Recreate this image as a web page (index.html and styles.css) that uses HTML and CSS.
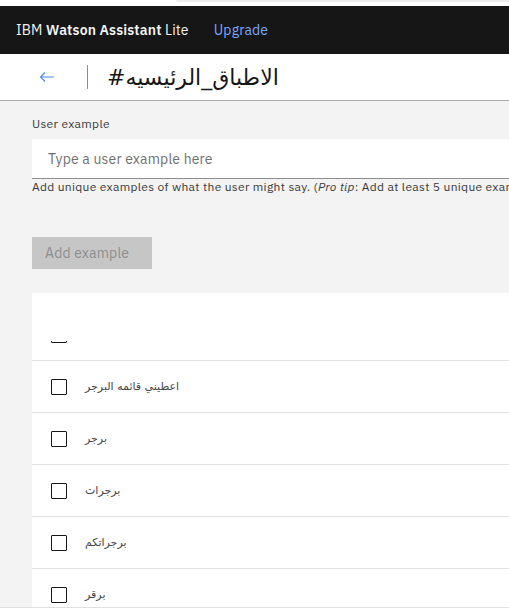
FILE: index.html
```html
<!DOCTYPE html>
<html lang="en">
<head>
<meta charset="utf-8">
<title>IBM Watson Assistant Lite</title>
<link rel="stylesheet" href="styles.css">
</head>
<body>
<div class="topstrip"><div class="tab"></div></div>
<header class="masthead">
  <span class="brand">IBM <b>Watson Assistant</b> Lite</span>
  <a class="upgrade" href="#">Upgrade</a>
</header>
<div class="pagehead">
  <svg class="back" width="16" height="12" viewBox="0 0 16 12"><path d="M15 6H1.5M6 1.5L1.5 6L6 10.5" fill="none" stroke="#4589ff" stroke-width="1.1"/></svg>
  <span class="divider"></span>
  <h1 class="title">#الاطباق_الرئيسيه</h1>
</div>
<main class="content">
  <div class="field-label">User example</div>
  <div class="input">Type a user example here</div>
  <div class="helper">Add unique examples of what the user might say. (<i>Pro tip</i>: Add at least 5 unique examples to help Watson understand.)</div>
  <button class="btn">Add example</button>
  <section class="list">
    <div class="list-head"></div>
    <div class="viewport">
      <div class="rows">
        <div class="row first"><span class="cb"></span><span class="txt">اعطيني قائمة البرجر</span></div>
        <div class="row"><span class="cb"></span><span class="txt">اعطيني قائمه البرجر</span></div>
        <div class="row"><span class="cb"></span><span class="txt">برجر</span></div>
        <div class="row"><span class="cb"></span><span class="txt">برجرات</span></div>
        <div class="row"><span class="cb"></span><span class="txt">برجراتكم</span></div>
        <div class="row"><span class="cb"></span><span class="txt">برقر</span></div>
      </div>
    </div>
  </section>
</main>
<div class="footer"></div>
</body>
</html>
```
FILE: styles.css
```css
html, body {
  margin: 0;
  padding: 0;
}
body {
  width: 509px;
  height: 614px;
  overflow: hidden;
  background: #ffffff;
  font-family: "IBM Plex Sans", "Noto Sans", Inter, sans-serif;
  color: #161616;
}
.topstrip {
  height: 6px;
  display: flex;
}
.topstrip .tab {
  margin-left: 176px;
  flex: 1;
  height: 2px;
  background: #ededed;
  border-bottom-left-radius: 8px;
}
.masthead {
  height: 48px;
  background: #161616;
  display: flex;
  align-items: center;
  padding-left: 16px;
  gap: 25px;
  font-size: 14px;
  letter-spacing: 0.16px;
}
.brand {
  color: #f4f4f4;
}
.brand b {
  font-weight: 600;
}
.upgrade {
  color: #78a9ff;
  text-decoration: none;
}
.pagehead {
  height: 46px;
  border-bottom: 1px solid #a8a8a8;
  display: flex;
  align-items: center;
  padding-left: 39px;
}
.back {
  display: block;
}
.divider {
  width: 1px;
  height: 24px;
  background: #8d8d8d;
  margin-left: 32px;
}
.title {
  margin: 0 0 0 19px;
  font-family: "DejaVu Sans", "Liberation Sans", sans-serif;
  font-weight: 400;
  font-size: 22px;
  color: #161616;
}
.content {
  background: #f3f3f3;
  height: 506px;
  overflow: hidden;
  padding-left: 32px;
  box-sizing: border-box;
  padding-top: 15px;
  width: 900px;
}
.field-label {
  font-size: 12px;
  line-height: 16px;
  letter-spacing: 0.32px;
  color: #393939;
  margin-bottom: 7px;
}
.input {
  background: #ffffff;
  height: 39px;
  border-bottom: 1px solid #8d8d8d;
  box-sizing: content-box;
  display: flex;
  align-items: center;
  padding-left: 16px;
  font-size: 14px;
  letter-spacing: 0.16px;
  color: #6f6f6f;
}
.helper {
  font-size: 12px;
  line-height: 16px;
  letter-spacing: 0.32px;
  color: #393939;
  white-space: nowrap;
}
.btn {
  display: block;
  margin-top: 42px;
  width: 120px;
  height: 32px;
  border: 0;
  background: #c6c6c6;
  color: #8d8d8d;
  font-family: inherit;
  font-size: 14px;
  letter-spacing: 0.16px;
  text-align: left;
  padding: 0 0 0 13px;
}
.list {
  margin-top: 24px;
  background: #ffffff;
}
.list-head {
  height: 48px;
}
.viewport {
  overflow: hidden;
  height: 400px;
}
.row {
  height: 51px;
  border-bottom: 1px solid #e0e0e0;
  display: flex;
  align-items: center;
  padding-left: 19px;
}
.row.first {
  margin-top: -32px;
}
.cb {
  width: 14px;
  height: 14px;
  border: 1px solid #161616;
  border-radius: 1px;
  flex: none;
}
.txt {
  margin-left: 18px;
  font-family: "DejaVu Sans", "Liberation Sans", sans-serif;
  font-size: 11px;
  color: #454545;
}
.footer {
  border-top: 1px solid #e0e0e0;
}
```
